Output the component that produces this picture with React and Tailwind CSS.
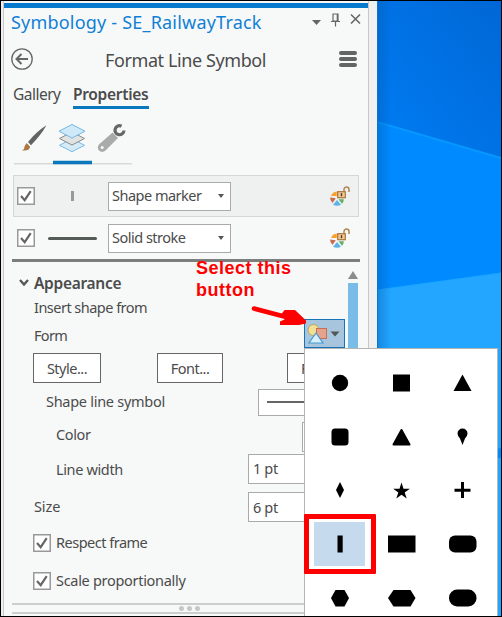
import React from "react";

const shapes = [
  <circle cx="20" cy="20" r="8.2" />,
  <rect x="12" y="11.5" width="17" height="17" />,
  <path d="M20.5 11.5 29.5 28h-18z" />,
  <rect x="11.5" y="11.5" width="17" height="17" rx="3.5" />,
  <path d="M20.5 13 28.5 27.500h-16z" stroke="#000" strokeWidth="2" strokeLinejoin="round" />,
  <path d="M20.500 28 18 21.500Q15.500 19 15.500 16.500a5 5 0 0 1 10 0Q25.500 19 23 21.500z" />,
  <path d="M20 12 24 20 20 28 16 20z" />,
  <path d="m20.500 12.500 2 6.200h6.300l-5.100 3.700 2 6-5.200-3.700-5.200 3.700 2-6-5.100-3.700h6.300z" />,
  <path d="M19 12h3v6.700h6.500v3H22V28h-3v-6.300h-6.500v-3H19z" />,
  <rect x="17.500" y="11.500" width="5.200" height="17" />,
  <rect x="7" y="11.500" width="27.500" height="17" />,
  <rect x="7" y="11.500" width="27.500" height="17" rx="6" />,
  <path d="M15.500 12h9l4.500 8-4.500 8.500h-9L11 20z" />,
  <path d="M12.500 12h17l5 8-5 8.500h-17L7 20z" />,
  <rect x="7" y="11.500" width="27.500" height="17" rx="8.200" />,
];

function Checkbox() {
  return (
    <svg className="h-[18px] w-[18px] shrink-0" viewBox="0 0 18 18">
      <rect x="0.75" y="0.75" width="16.5" height="16.5" fill="#fff" stroke="#999" strokeWidth="1.5" />
      <path d="m4 9 3.700 4.200 6-9" fill="none" stroke="#666" strokeWidth="2.2" />
    </svg>
  );
}

function ColorLock() {
  return (
    <svg className="h-5 w-5 shrink-0" viewBox="0 0 20 20">
      <path d="M1 10A7 7 0 0 1 6.800 5.500V10z" fill="#f9a12e" />
      <path d="M0 11.500 5.800 12.200 2.500 17Q0 14.500 0 11.500z" fill="#c96b4e" />
      <path d="m7 14 4 4.700Q7 21 3 18.700z" fill="#5db3e6" />
      <path d="M8.500 13.200h5.300q0 3-1.800 4.500z" fill="#62ad68" />
      <path d="M14 5V3.500a2.500 2.500 0 0 1 5 0V6" fill="none" stroke="#b28755" strokeWidth="1.500" />
      <rect x="7.700" y="5.700" width="7.600" height="6" fill="#f3c994" stroke="#a8763c" strokeWidth="1.200" />
      <path d="M11.500 7.200v3" stroke="#4b3520" strokeWidth="1.400" />
    </svg>
  );
}

function LayerRow({ label, selected, children }) {
  return (
    <div className={selected
      ? "ml-[9px] flex h-[42px] w-[346px] items-center border border-[#d6d8d8] bg-[#eff1f1] pl-[3px]"
      : "ml-[9px] flex h-[42px] w-[346px] items-center border border-transparent pl-[3px]"}>
      <Checkbox />
      <div className="flex w-[73px] shrink-0 items-center justify-center pl-[1px]">{children}</div>
      <div className="flex h-[29px] w-[123px] shrink-0 items-center justify-between border border-[#aaa] bg-white pr-1.5 pl-[3px]">
        <span className="text-[14.5px] tracking-[-0.5px]">{label}</span>
        <svg className="h-1 w-1.5" viewBox="0 0 6 4"><path d="M0 0h6L3 4z" fill="#555" /></svg>
      </div>
      <div className="ml-[99px]"><ColorLock /></div>
    </div>
  );
}

function Header() {
  return (
    <>
      <div className="flex h-[30px] items-center pl-[7px]">
        <h1 className="mb-0.5 w-[300px] text-[18px] leading-6 tracking-[0.2px] text-[#1080d5]">Symbology - SE_RailwayTrack</h1>
        <svg className="mb-[3px] h-5 w-[50px]" viewBox="0 0 50 20" fill="none" stroke="#666">
          <path d="M1 8h9l-4.500 5z" fill="#666" stroke="none" />
          <path d="M22 2h5v7h-5zM20 9.500h9M24.500 9.500v5M26.300 2v7" strokeWidth="1.200" />
          <path d="m40 2.500 9 9m0-9-9 9" strokeWidth="1.600" />
        </svg>
      </div>
      <div className="flex h-[42px] items-center pl-[7px]">
        <svg className="h-[22px] w-[22px]" viewBox="0 0 22 22" fill="none" stroke="#666">
          <circle cx="11" cy="11" r="10.200" strokeWidth="1.300" />
          <path d="M17 11H6.500M10.500 6 5.500 11l5 5" strokeWidth="2" />
        </svg>
        <h2 className="ml-[72px] w-[234px] pt-0.5 text-[18px] tracking-[-0.4px] whitespace-nowrap">Format Line Symbol</h2>
        <div className="flex w-[18px] flex-col gap-[2px]">
          <div className="h-1 rounded bg-[#646464]" />
          <div className="h-1 rounded bg-[#646464]" />
          <div className="h-1 rounded bg-[#646464]" />
        </div>
      </div>
      <div className="flex h-[40px] pl-[9px] text-[15.5px]">
        <div className="h-[29px] w-[60px] pt-[3px] tracking-[-0.5px]">Gallery</div>
        <div className="h-[29px] w-[76px] border-b-[3px] border-[#0b78be] pt-[3px] font-semibold tracking-[-0.3px]">Properties</div>
      </div>
      <svg className="ml-[10px] h-[45px] w-[118px] shrink-0" viewBox="0 0 118 45">
        <path d="M0 43.800h118" stroke="#d9d9d9" strokeWidth="1.500" />
        <path d="M39 42.500h39" stroke="#0b78be" strokeWidth="3.500" />
        <path d="M32 5.500Q22 12 14 22l3 3.200Q27 15 32 6z" fill="#636363" />
        <path d="m12.500 23 3.500 3.500c0 4-4 4-8 4q3-2 2.500-4z" fill="#aa7842" />
        <path d="m58 18.500 12.500 6.800L58 31.700l-12.500-6.400z" fill="#d5ebf8" stroke="#7abbe4" />
        <path d="m58 12 12.500 6.500L58 25l-12.500-6.500z" fill="#e1e2e2" stroke="#888" />
        <path d="m58 4.500 13 6.700L58 18l-13-6.800z" fill="#d0e9f8" stroke="#72b7e3" />
        <path d="m85 24.500 13.500-12 5.500 5.500-12.500 12.500z" fill="#aaa" />
        <circle cx="88.200" cy="27.500" r="4.400" fill="#aaa" />
        <circle cx="88.200" cy="27.500" r="1.500" fill="#f7f9f9" />
        <path d="M107.500 6.200A4.500 4.500 0 1 0 110 10.500" fill="none" stroke="#666" strokeWidth="3.200" />
      </svg>
      <div className="h-2.5 shrink-0" />
    </>
  );
}

function Appearance() {
  return (
    <div className="h-[341px] pt-[7px] text-[14.5px] tracking-[-0.36px]">
      <div className="flex h-[28px] items-center pl-[15px]">
        <svg className="h-2 w-2.5" viewBox="0 0 10 8"><path d="m1 1 4 4.500L9 1" stroke="#555" strokeWidth="2.300" fill="none" /></svg>
        <span className="ml-[5px] w-[314px] pt-px text-[15.5px] font-semibold tracking-[-0.3px]">Appearance</span>
        <svg className="mb-4 h-2 w-[10px]" viewBox="0 0 10 8"><path d="M5 0 10 8H0z" fill="#8b8b8b" /></svg>
      </div>
      <div className="flex h-[58px] pl-[30px]">
        <div className="flex h-[58px] w-[270px] flex-col">
          <span className="h-6 leading-[21px] tracking-[-0.52px]">Insert shape from</span>
          <span className="h-[28px] leading-[28px] tracking-[-0.7px]">Form</span>
        </div>
        <button className="mt-[22px] flex h-[29px] w-[41px] items-center border border-[#1673b8] bg-[#a7c6de]">
          <svg className="h-[27px] w-[39px]" viewBox="0 0 39 27">
            <circle cx="8.500" cy="10" r="5.500" fill="#f1e194" stroke="#c3a15c" />
            <rect x="11.500" y="8.500" width="10" height="10" fill="#e6a38c" stroke="#c86e52" />
            <path d="m11 13 7 10H4z" fill="#d7effb" stroke="#459bcf" strokeWidth="1.200" />
            <path d="M25.500 11.500h9L30 16.500z" fill="#555" />
          </svg>
        </button>
        <div className="-mt-[14px] ml-[3px] h-[78px] w-2.5 shrink-0 bg-[#79bce7]" />
      </div>
      <div className="flex pl-[29px]">
        <button className="mt-[-2px] h-[30px] w-[68px] border border-[#666] bg-white leading-[28px] tracking-[-0.5px]">Style...</button>
        <button className="mt-[-2px] ml-[56px] h-[30px] w-[66px] border border-[#666] bg-white leading-[28px] tracking-[-0.5px]">Font...</button>
        <button className="mt-[-2px] ml-[64px] h-[30px] w-[62px] border border-[#666] bg-white pl-[13px] text-left leading-[28px]">File...</button>
      </div>
      <div className="mt-1 flex h-[30px] items-center pl-[42px]">
        <span className="w-[212px] tracking-[-0.28px]">Shape line symbol</span>
        <div className="flex h-[27px] w-[90px] items-center border border-[#aaa] bg-white pl-2"><div className="h-0.5 w-[60px] bg-[#666]" /></div>
      </div>
      <div className="mt-0.5 flex h-[35px] items-center pl-[52px]">
        <span className="w-[246px] pb-1">Color</span>
        <div className="h-[30px] w-[40px] border border-[#aaa] bg-white" />
      </div>
      <div className="flex h-[34px] items-center pl-[52px]">
        <span className="w-[192px] pb-0.5">Line width</span>
        <div className="mb-1 h-[30px] w-[90px] border border-[#aaa] bg-white pl-1 leading-[27px]">1 pt</div>
      </div>
      <div className="flex h-[37px] items-center pl-[30px]">
        <span className="w-[214px] tracking-[-0.1px]">Size</span>
        <div className="h-[30px] w-[90px] border border-[#aaa] bg-white pl-1 leading-[28px]">6 pt</div>
      </div>
      <div className="flex h-[35px] items-center pl-[29px]"><Checkbox /><span className="ml-[5px] tracking-[-0.5px]">Respect frame</span></div>
      <div className="flex h-[42px] items-center pl-[29px]"><Checkbox /><span className="ml-[5px] tracking-[-0.3px]">Scale proportionally</span></div>
    </div>
  );
}

function Wallpaper() {
  return (
    <svg className="h-[615px] w-[124px] shrink-0" viewBox="0 0 124 615" preserveAspectRatio="none">
      <defs>
        <linearGradient id="sky" x1="1" y1="0" x2="0" y2="1"><stop stopColor="#0067d5" /><stop offset="1" stopColor="#007df5" /></linearGradient>
        <linearGradient id="edge"><stop stopColor="#0059aa" stopOpacity=".4" /><stop offset="1" stopColor="#0059aa" stopOpacity="0" /></linearGradient>
      </defs>
      <path d="M0 0h124v157L0 121z" fill="url(#sky)" />
      <path d="M0 121 124 157v115L0 289z" fill="#008aff" />
      <path d="M0 289 124 272v343H0z" fill="#22a6ff" />
      <path d="M0 121 124 157" stroke="#0798ff" strokeWidth="2" />
      <path d="M0 289 124 272" stroke="#14a2ff" />
      <path d="m119 448 5-1v10h-5z" fill="#008aff" />
      <path d="M0 0h14v615H0z" fill="url(#edge)" />
      <path d="M.500 0v615" stroke="#0877cc" />
    </svg>
  );
}

function ShapeMenu() {
  return (
    <div className="absolute top-[347px] left-[303px] h-[268px] w-[194px] overflow-hidden border border-b-0 border-[#b5b5b5] bg-white pt-[7px] pl-1">
      <div className="grid w-[183px] grid-cols-3">
        {shapes.map((shape, index) => (
          <div key={index} className="flex h-[53.75px] items-center justify-center">
            <div className={index === 9 ? "flex h-11 w-[51px] items-center justify-center bg-[#c5dbed]" : "flex h-11 w-[51px] items-center justify-center"}>
              <svg className="h-10 w-10" viewBox="0 0 40 40">{shape}</svg>
            </div>
          </div>
        ))}
      </div>
    </div>
  );
}

export default function App() {
  return (
    <main className="relative flex h-[617px] w-[502px] overflow-hidden border border-black bg-[#f0f0f0] font-['Noto_Sans','Open_Sans',sans-serif] text-[#4b4b4b]">
      <section className="ml-0.5 flex h-[615px] w-[366px] shrink-0 flex-col border-x border-[#c9c5c8] bg-[#f7f9f9] pt-0.5">
        <div className="h-[5px] shrink-0 bg-[#087ace]" />
        <Header />
        <LayerRow label="Shape marker" selected><div className="h-[10px] w-[3px] bg-[#999]" /></LayerRow>
        <LayerRow label="Solid stroke"><div className="h-[3px] w-[49px] rounded bg-[#555b57]" /></LayerRow>
        <div className="ml-2 h-[3px] w-[348px] shrink-0 bg-[#7c7e7e]" />
        <Appearance />
        <div className="ml-2 flex h-[11px] w-[348px] shrink-0 items-center justify-center gap-[3px] border-y-2 border-[#cdcdcd] pl-1.5">
          <i className="h-[5px] w-[5px] rounded-full bg-[#c7c7c7]" />
          <i className="h-[5px] w-[5px] rounded-full bg-[#c7c7c7]" />
          <i className="h-[5px] w-[5px] rounded-full bg-[#c7c7c7]" />
        </div>
      </section>
      <div className="w-2 shrink-0" />
      <Wallpaper />
      <ShapeMenu />
      <div className="absolute top-[256px] left-[195px] font-['Liberation_Sans',Arial,sans-serif] text-[18px] leading-[22px] font-bold tracking-[0.5px] text-[#f00]">Select this<br />button</div>
      <svg className="absolute top-[303px] left-[248px] h-[25px] w-[60px]" viewBox="0 0 60 25">
        <path d="m5 4.500 34 9" stroke="#f00" strokeWidth="4.600" strokeLinecap="round" />
        <path d="M35.500 6H46L57 16.500v3L50 21H31v-3.500l4.500-2V12l-3-2z" fill="#f00" />
      </svg>
      <div className="absolute top-[513px] left-[303px] h-[60px] w-[72px] rounded-[1px] border-[5px] border-[#f00]" />
    </main>
  );
}
